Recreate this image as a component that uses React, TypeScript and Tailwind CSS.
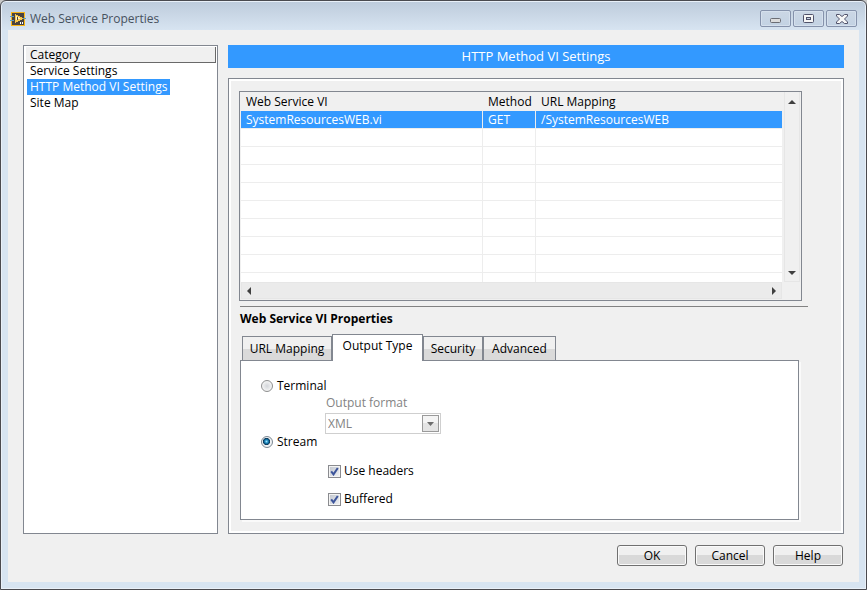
import { useState } from 'react';
import type { ReactNode } from 'react';

const categories = ['Service Settings', 'HTTP Method VI Settings', 'Site Map'];
const tabs = [
  { name: 'URL Mapping', width: 'w-[90px]' },
  { name: 'Output Type', width: 'w-[91px]' },
  { name: 'Security', width: 'w-[60px]' },
  { name: 'Advanced', width: 'w-[73px]' },
];
const services = [{ vi: 'SystemResourcesWEB.vi', method: 'GET', url: '/SystemResourcesWEB' }];
const blankRows = [1, 2, 3, 4, 5, 6, 7, 8];

function AppIcon() {
  return (
    <svg width="16" height="16" viewBox="0 0 16 16" shapeRendering="crispEdges" aria-hidden="true">
      <rect x="1" y="1" width="14" height="14" fill="#f9b616" />
      <rect x="2" y="2" width="12" height="12" fill="#4a4440" />
      <path d="M0 5h4v1H0zM0 9h4v1H0zM12 7h4v1h-4z" fill="#5b9cc0" />
      <path d="M5 3h1v1h2v1h2v1h2v1h1v1h-1v1h-2v1H8v1H6v1H5z" fill="#f9c74a" />
      <path d="M6 5h1v1h2v1h1v1H8v1H6z" fill="#fff3c4" />
      <path d="M7 6h1v3H7z" fill="#4a4440" />
      <path d="M10 11h1v2h-1zM12 11h1v2h-1z" fill="#ffffff" />
    </svg>
  );
}

function TitleButton({ label, children }: { label: string; children: ReactNode }) {
  return (
    <button
      type="button"
      aria-label={label}
      className="flex h-[17px] w-[31px] items-center justify-center rounded-xs border border-[#8592ab] bg-linear-to-b from-[#cbd7e5] to-[#c3d2e3] shadow-[inset_0_0_0_1px_#d5e0ed]"
    >
      {children}
    </button>
  );
}

function Arrow({ d }: { d: string }) {
  return (
    <svg width="8" height="8" viewBox="0 0 8 8" aria-hidden="true">
      <path d={d} fill="#404040" />
    </svg>
  );
}

function Tick() {
  return (
    <svg
      width="9"
      height="9"
      viewBox="0 0 9 9"
      className="pointer-events-none absolute top-[2px] left-[2px] hidden peer-checked:block"
      aria-hidden="true"
    >
      <path d="M1.2 4.4l2.3 3L7.8 1" fill="none" stroke="#3d559b" strokeWidth="2" />
    </svg>
  );
}

function CheckOption({ label }: { label: string }) {
  return (
    <label className="flex h-4 items-center gap-[3px]">
      <span className="relative size-[13px]">
        <input
          type="checkbox"
          defaultChecked
          className="peer block size-[13px] appearance-none border border-[#8a8b8f] bg-linear-to-br from-[#bfc4cc] to-[#f3f4f6] shadow-[inset_0_0_0_1px_#f4f4f4]"
        />
        <Tick />
      </span>
      {label}
    </label>
  );
}

function RadioOption({ label, checked, onChange }: { label: string; checked: boolean; onChange: () => void }) {
  return (
    <label className="flex h-4 items-center gap-1">
      <input
        type="radio"
        name="output"
        checked={checked}
        onChange={onChange}
        className="size-3 appearance-none rounded-full border border-[#8e8f8f] bg-[radial-gradient(circle,#d3d6da,#f4f4f4_70%)] checked:border-[#7b8792] checked:bg-[radial-gradient(circle_at_45%_45%,#9fe4fb_0,#1685bd_22%,#0b3555_42%,#eef1f3_50%)]"
      />
      {label}
    </label>
  );
}

function ServiceTable() {
  return (
    <div className="mr-[39px] border border-[#828790] bg-[#f0f0f0] px-px pb-px">
      <div className="flex">
        <table className="flex-1 table-fixed border-separate border-spacing-0 bg-white">
          <colgroup>
            <col className="w-[242px]" />
            <col className="w-[53px]" />
            <col />
          </colgroup>
          <thead className="bg-[#f0f0f0]">
            <tr className="h-[19px] text-left">
              <th className="p-0 pl-[5px] font-normal">Web Service VI</th>
              <th className="p-0 pl-[5px] font-normal">Method</th>
              <th className="p-0 pl-[5px] font-normal">URL Mapping</th>
            </tr>
          </thead>
          <tbody>
            {services.map((s) => (
              <tr key={s.vi} className="h-[18px] bg-[#3399ff] leading-4 text-white">
                <td className="border-r border-b border-[#ededed] p-0 pl-[5px]">{s.vi}</td>
                <td className="border-r border-b border-[#ededed] p-0 pl-[5px]">{s.method}</td>
                <td className="border-b border-[#ededed] p-0 pl-[5px]">{s.url}</td>
              </tr>
            ))}
            {blankRows.map((n) => (
              <tr key={n} className="h-[18px]">
                <td className="border-r border-b border-[#ededed] p-0" />
                <td className="border-r border-b border-[#ededed] p-0" />
                <td className="border-b border-[#ededed] p-0" />
              </tr>
            ))}
            <tr className="h-[9px]">
              <td className="border-r border-[#ededed] p-0" />
              <td className="border-r border-[#ededed] p-0" />
              <td className="p-0" />
            </tr>
          </tbody>
        </table>
        <div className="ml-[2px] flex w-4 flex-col items-center justify-between border-x border-b border-[#e6e6e6] bg-[#f0f0f0] pt-[6px] pb-1">
          <Arrow d="M0 6l4-4 4 4z" />
          <Arrow d="M0 2l4 4 4-4z" />
        </div>
      </div>
      <div className="mr-[18px] flex h-[17px] items-center justify-between border border-[#e6e6e6] bg-[#ebebeb] px-[3px]">
        <Arrow d="M6 0L2 4l4 4z" />
        <Arrow d="M2 0l4 4-4 4z" />
      </div>
    </div>
  );
}

function OutputType() {
  const [output, setOutput] = useState('stream');

  return (
    <div className="flex flex-col items-start pt-[17px] pl-5">
      <RadioOption label="Terminal" checked={output === 'terminal'} onChange={() => setOutput('terminal')} />
      <div className="ml-16 flex flex-col text-[#838383]">
        <label htmlFor="format" className="ml-px h-[19px] pt-px leading-4">
          Output format
        </label>
        <div className="relative">
          <select
            id="format"
            disabled={output !== 'terminal'}
            className="block h-[21px] w-[116px] appearance-none border border-[#cfcfcf] bg-white pl-[2px] text-xs opacity-100"
          >
            <option>XML</option>
          </select>
          <span className="pointer-events-none absolute top-[2px] right-[2px] flex h-[17px] w-[17px] items-center justify-center border border-[#9a9a9a] bg-linear-to-b from-[#f4f4f4] from-50% to-[#e4e4e4] to-50%">
            <svg width="7" height="4" viewBox="0 0 7 4" aria-hidden="true">
              <path d="M0 0h7L3.5 4z" fill="#6d6d6d" />
            </svg>
          </span>
        </div>
      </div>
      <RadioOption label="Stream" checked={output === 'stream'} onChange={() => setOutput('stream')} />
      <div className="mt-[13px] ml-[67px] flex flex-col gap-3">
        <CheckOption label="Use headers" />
        <CheckOption label="Buffered" />
      </div>
    </div>
  );
}

export default function App() {
  const [category, setCategory] = useState(categories[1]);
  const [tab, setTab] = useState('Output Type');

  return (
    <div className="bg-[#c8c8c8] font-['Open_Sans','Noto_Sans',sans-serif] text-xs text-black">
      <div className="flex min-h-screen flex-col rounded-t-md border border-[#4a4a4f] bg-[#d7e4f1] bg-[linear-gradient(#bdcbdb,#d7e4f1_29px)] px-[7px] pb-[7px] shadow-[inset_0_0_0_1px_#e9f0f8]">
        <header className="flex h-[29px] items-center gap-1 pt-[6px] pr-[2px] pl-[2px]">
          <AppIcon />
          <h1 className="flex-1 text-[#47525e]">Web Service Properties</h1>
          <div className="flex gap-[2px]">
            <TitleButton label="Minimize">
              <svg width="12" height="6" viewBox="0 0 12 6" className="mt-1">
                <rect x="0.5" y="0.5" width="10" height="4" rx="1" fill="#dcdcdc" stroke="#6b6d74" />
              </svg>
            </TitleButton>
            <TitleButton label="Maximize">
              <svg width="11" height="9" viewBox="0 0 11 9">
                <rect x="0.5" y="0.5" width="10" height="8" rx="1" fill="#f6f6f6" stroke="#50526a" />
                <rect x="3.5" y="3.5" width="4" height="2" fill="#c6d4e4" stroke="#50526a" />
              </svg>
            </TitleButton>
            <TitleButton label="Close">
              <svg width="12" height="10" viewBox="0 0 12 10">
                <path
                  d="M0.5 0.5h3L6 2.500 8.500 0.500h3v1.500L8.500 5l3 3v1.500h-3L6 7.500 3.500 9.500h-3V8l3-3-3-3z"
                  fill="#f6f6f6"
                  stroke="#50526a"
                />
              </svg>
            </TitleButton>
          </div>
        </header>

        <main className="flex flex-1 flex-col bg-[#f0f0f0] px-[15px] pt-[15px] pb-4">
          <div className="flex flex-1 gap-[10px]">
            {/* category list */}
            <nav className="w-[195px] border border-[#828790] bg-white px-px pt-px">
              <h2 className="ml-px h-4 border-r border-b border-[#696969] bg-[#f0f0f0] pl-1 leading-4">Category</h2>
              <ul className="pl-[2px]">
                {categories.map((name) => (
                  <li key={name} className="h-4">
                    <button
                      type="button"
                      onClick={() => setCategory(name)}
                      className={`block h-4 px-[3px] leading-4 ${name === category ? 'bg-[#3399ff] text-white' : ''}`}
                    >
                      {name}
                    </button>
                  </li>
                ))}
              </ul>
            </nav>

            <div className="flex flex-1 flex-col gap-[10px]">
              <h2 className="h-[23px] bg-[#3399ff] text-center text-[13px] leading-[22px] text-white">{category}</h2>

              <section className="flex flex-1 flex-col border border-[#828790] pt-3 pr-[2px] pb-[13px] pl-[10px] shadow-[inset_0_0_0_2px_#ffffff]">
                <ServiceTable />
                <div className="flex flex-1 flex-col pl-px">
                  <hr className="mt-[5px] mr-[33px] border-t-[#828282]" />
                  <h3 className="mt-1 h-4 leading-4 font-bold">Web Service VI Properties</h3>

                  <div className="mt-[7px] flex items-end pl-[2px]" role="tablist">
                    {tabs.map(({ name, width }) => (
                      <button
                        key={name}
                        type="button"
                        role="tab"
                        aria-selected={name === tab}
                        onClick={() => setTab(name)}
                        className={`${width} border border-b-0 border-[#828790] ${
                          name === tab
                            ? 'relative -mb-px h-[27px] bg-white pb-1'
                            : 'h-6 bg-linear-to-b from-[#f0f0f0] from-50% to-[#dadada] to-50%'
                        }`}
                      >
                        {name}
                      </button>
                    ))}
                  </div>
                  <div
                    className="mr-[42px] flex-1 border border-[#828790] bg-white shadow-[2px_2px_0_#fafafa]"
                    role="tabpanel"
                  >
                    <OutputType />
                  </div>
                </div>
              </section>
            </div>
          </div>

          <footer className="mt-[11px] mr-px flex justify-end gap-2">
            {['OK', 'Cancel', 'Help'].map((name) => (
              <button
                key={name}
                type="button"
                className="h-[21px] w-[70px] rounded-[3px] border border-[#707070] bg-linear-to-b from-[#f0f0f0] from-50% to-[#d9d9d9] to-50% leading-none shadow-[inset_0_0_0_1px_#fafafa]"
              >
                {name}
              </button>
            ))}
          </footer>
        </main>
      </div>
    </div>
  );
}
